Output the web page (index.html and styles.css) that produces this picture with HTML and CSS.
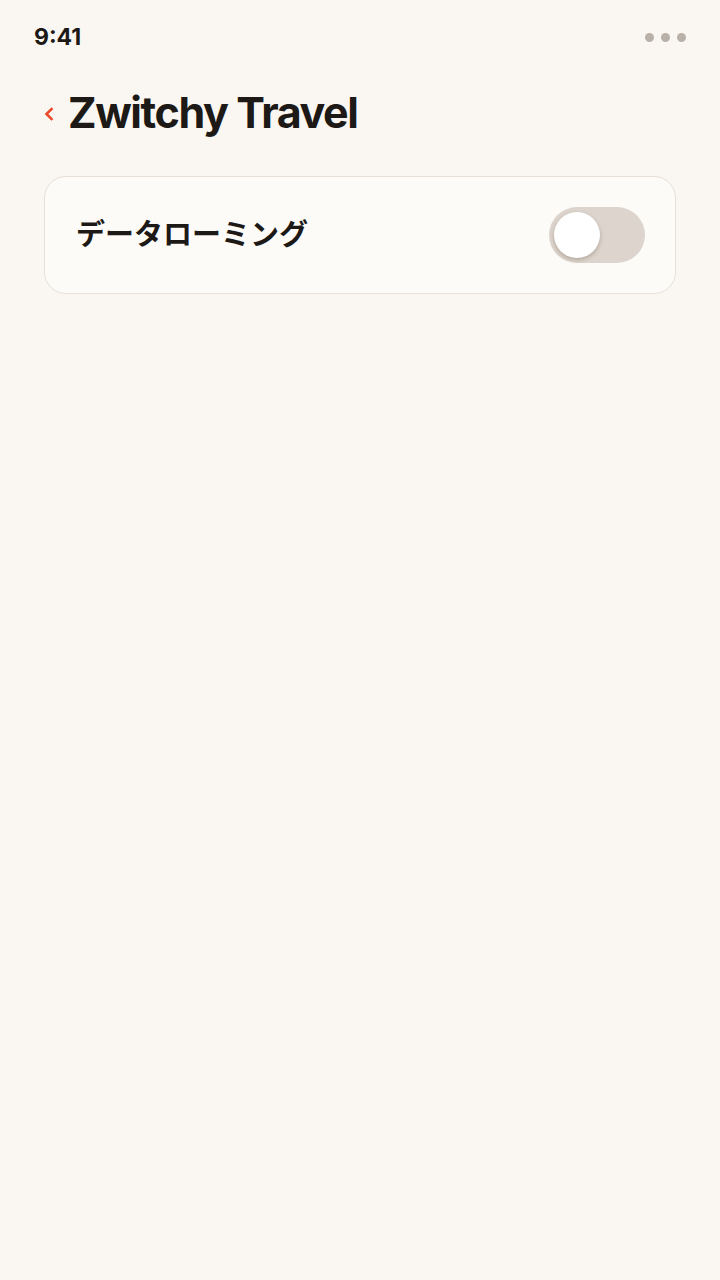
FILE: index.html
```html
<!DOCTYPE html>
<html lang="ja">
  <head>
    <meta charset="UTF-8" />
    <meta name="viewport" content="width=device-width, initial-scale=1.0" />
    <title>Zwitchy Travel</title>
    <link rel="stylesheet" href="styles.css">
  </head>
  <body>
    <div class="status-bar">
      <span class="clock">9:41</span>
      <span class="dots"><i></i><i></i><i></i></span>
    </div>

    <header class="page-header">
      <svg class="back" width="10" height="14" viewBox="0 0 10 14">
        <path d="M7.5 2 L2.5 7 L7.5 12" fill="none" stroke="#ea4a2c" stroke-width="2.6" stroke-linecap="square" />
      </svg>
      <h1>Zwitchy Travel</h1>
    </header>

    <section class="card">
      <span class="label">データローミング</span>
      <div class="toggle"><div class="knob"></div></div>
    </section>
  </body>
</html>
```

FILE: styles.css
```css
body {
  margin: 0;
  background: #faf7f2;
  color: #1c1917;
  font-family: "Inter", "Noto Sans CJK JP", sans-serif;
}

.status-bar {
  display: flex;
  justify-content: space-between;
  align-items: center;
  padding: 24px 34px 0 34px;
  height: 26px;
}

.clock {
  font-size: 23px;
  font-weight: 700;
  letter-spacing: 0;
}

.dots {
  display: flex;
  gap: 7px;
}

.dots i {
  width: 9px;
  height: 9px;
  border-radius: 50%;
  background: #b8b1aa;
}

.page-header {
  display: flex;
  align-items: center;
  gap: 14px;
  padding: 36px 0 0 44px;
  height: 52px;
}

.back {
  margin-top: 4px;
}

.page-header h1 {
  margin: 0;
  font-size: 43px;
  font-weight: 700;
  letter-spacing: -1.4px;
}

.card {
  margin: 38px 44px 0 44px;
  height: 118px;
  box-sizing: border-box;
  border: 1px solid #e7e0d8;
  border-radius: 22px;
  background: #fcfbf8;
  display: flex;
  align-items: center;
  justify-content: space-between;
  padding: 0 30px 0 31px;
}

.label {
  font-family: "Noto Sans CJK JP", sans-serif;
  font-size: 29px;
  font-weight: 700;
  padding-bottom: 6px;
}

.toggle {
  width: 96px;
  height: 56px;
  border-radius: 28px;
  background: #ddd5cd;
  display: flex;
  align-items: center;
  padding-left: 5px;
  box-sizing: border-box;
}

.knob {
  width: 46px;
  height: 46px;
  border-radius: 50%;
  background: #fff;
  box-shadow: 0 2px 4px rgba(80, 60, 40, 0.3);
}
```
